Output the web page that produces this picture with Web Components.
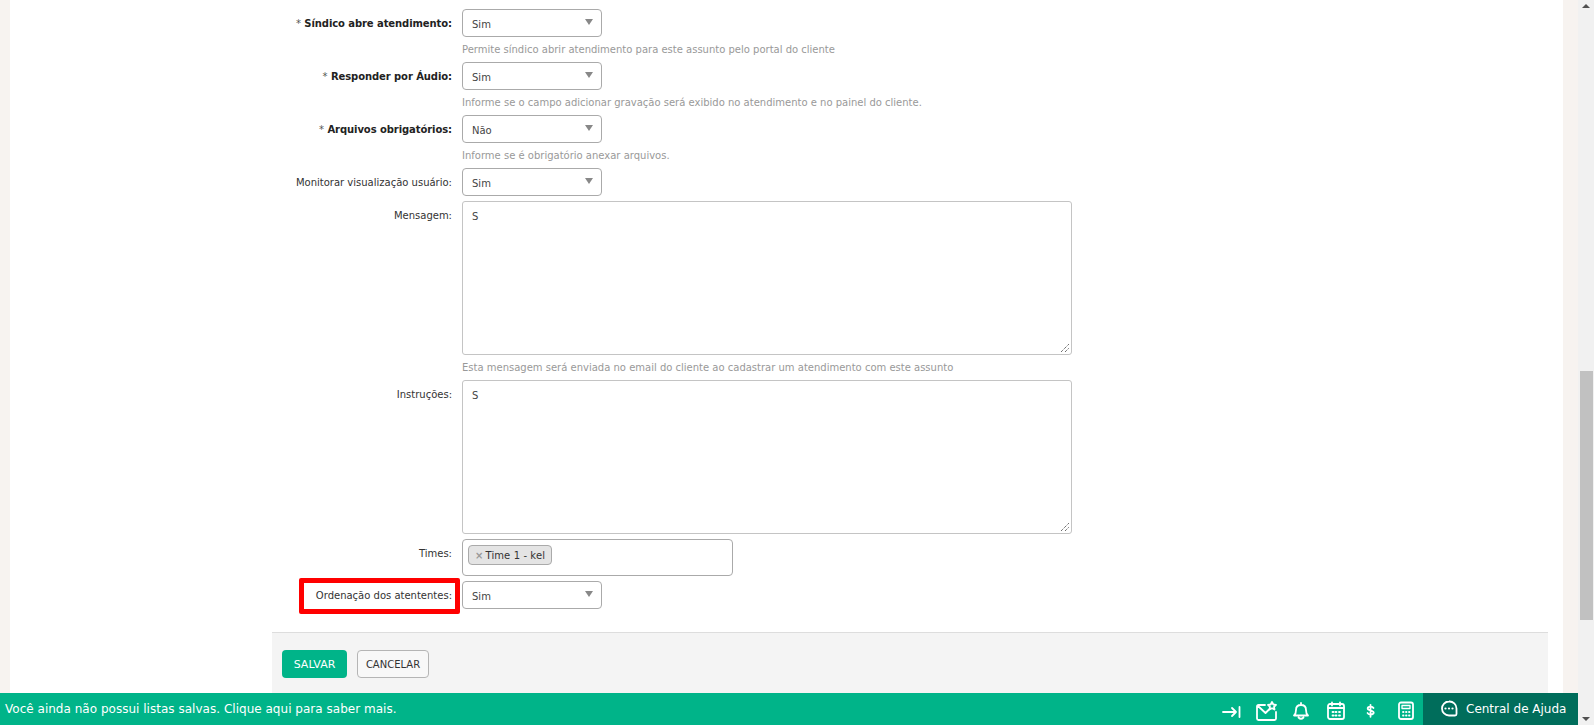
<!DOCTYPE html>
<html lang="pt-BR">
<head>
<meta charset="utf-8">
<title>Assunto</title>
<style>
    html, body { margin: 0; height: 100%; overflow: hidden; }
    body { font-family: "DejaVu Sans", Verdana, sans-serif; font-size: 10px; color: #333; }
</style>
</head>
<body>
<app-shell>
    <form-row label="Síndico abre atendimento:" required hint="Permite síndico abrir atendimento para este assunto pelo portal do cliente"><select-box value="Sim"></select-box></form-row>
    <form-row label="Responder por Áudio:" required hint="Informe se o campo adicionar gravação será exibido no atendimento e no painel do cliente."><select-box value="Sim"></select-box></form-row>
    <form-row label="Arquivos obrigatórios:" required hint="Informe se é obrigatório anexar arquivos."><select-box value="Não"></select-box></form-row>
    <form-row label="Monitorar visualização usuário:"><select-box value="Sim"></select-box></form-row>
    <form-row label="Mensagem:" hint="Esta mensagem será enviada no email do cliente ao cadastrar um atendimento com este assunto"><text-box value="S"></text-box></form-row>
    <form-row label="Instruções:"><text-box value="S"></text-box></form-row>
    <form-row label="Times:"><tag-field><tag-chip>Time 1 - kel</tag-chip></tag-field></form-row>
    <form-row label="Ordenação dos atententes:" marked><select-box value="Sim"></select-box></form-row>
</app-shell>

<script>
class AppShell extends HTMLElement {
    constructor() {
        super();
        this.attachShadow({mode: "open"});
    }
    connectedCallback() {
        this.shadowRoot.innerHTML = `
        <style>
            :host { display: grid; grid-template-columns: 1fr 16px; height: 725px; }
            .left { display: flex; flex-direction: column; min-width: 0; height: 725px; }
            .page { flex: 1; min-height: 0; overflow: hidden; background: #f7f3f0; padding: 0 15px 0 10px; }
            .white { background: #fff; height: 100%; padding: 0 15px 0 262px; }
            .form { display: flex; flex-direction: column; height: 632px; padding-top: 9px; box-sizing: border-box; }
        </style>
        <div class="left">
            <div class="page">
                <div class="white">
                    <div class="form"><slot></slot></div>
                    <form-actions></form-actions>
                </div>
            </div>
            <status-bar></status-bar>
        </div>
        <page-scrollbar></page-scrollbar>
        `;
    }
}

class FormRow extends HTMLElement {
    constructor() {
        super();
        this.attachShadow({mode: "open"});
    }
    connectedCallback() {
        const required = this.hasAttribute("required");
        const hint = this.getAttribute("hint");
        this.shadowRoot.innerHTML = `
        <style>
            :host { display: grid; grid-template-columns: 181px 1fr; column-gap: 9px; margin-bottom: 5px; }
            label { text-align: right; padding-top: 8px; padding-right: 1px; line-height: 14px; font-size: 10px; color: #333; position: relative; white-space: nowrap; }
            label.req { font-weight: bold; color: #222; letter-spacing: -.08px; }
            .star { color: #555; font-weight: normal; }
            .hint { color: #999; font-size: 10px; line-height: 14px; margin-top: 6px; height: 14px; }
            .mark { position: absolute; left: 27px; right: -7px; top: -3px; bottom: -5px; border: 5px solid #f00; border-radius: 2px; }
        </style>
        <label class="${required ? "req" : ""}">${required ? '<span class="star">*</span> ' : ""}${this.getAttribute("label")}${this.hasAttribute("marked") ? '<span class="mark"></span>' : ""}</label>
        <div>
            <slot></slot>
            ${hint ? `<div class="hint">${hint}</div>` : ""}
        </div>
        `;
    }
}

class SelectBox extends HTMLElement {
    constructor() {
        super();
        this.attachShadow({mode: "open"});
    }
    connectedCallback() {
        this.shadowRoot.innerHTML = `
        <style>
            :host { display: flex; align-items: center; box-sizing: border-box; width: 140px; height: 28px; border: 1px solid #aaa; border-radius: 4px; padding: 2px 8px 0 9px; background: #fff; font-size: 10px; color: #444; justify-content: space-between; }
            i { width: 0; height: 0; border: solid transparent; border-width: 6px 4px 0 4px; border-top-color: #888; margin: -4px 0 0 0; }
        </style>
        <span>${this.getAttribute("value")}</span><i></i>
        `;
    }
}

class TextBox extends HTMLElement {
    constructor() {
        super();
        this.attachShadow({mode: "open"});
    }
    connectedCallback() {
        this.shadowRoot.innerHTML = `
        <style>
            :host { display: block; position: relative; box-sizing: border-box; width: 610px; height: 154px; border: 1px solid #c4c4c4; border-radius: 3px; padding: 8px 9px; background: #fff; font-size: 10px; line-height: 14px; color: #444; }
            svg { position: absolute; right: 1px; bottom: 1px; }
        </style>
        ${this.getAttribute("value")}
        <svg width="10" height="10" viewBox="0 0 10 10"><path d="M1 9 9 1M5 9 9 5" stroke="#333" stroke-width="1" stroke-dasharray="1 1" fill="none"/></svg>
        `;
    }
}

class TagField extends HTMLElement {
    constructor() {
        super();
        this.attachShadow({mode: "open"});
    }
    connectedCallback() {
        this.shadowRoot.innerHTML = `
        <style>
            :host { display: block; box-sizing: border-box; width: 271px; height: 37px; border: 1px solid #aaa; border-radius: 4px; padding: 5px 5px; background: #fff; }
        </style>
        <slot></slot>
        `;
    }
}

class TagChip extends HTMLElement {
    constructor() {
        super();
        this.attachShadow({mode: "open"});
    }
    connectedCallback() {
        this.shadowRoot.innerHTML = `
        <style>
            :host { display: inline-flex; align-items: center; box-sizing: border-box; height: 20px; padding: 0 6px 0 6px; background: #e4e4e4; border: 1px solid #aaa; border-radius: 4px; font-size: 10px; letter-spacing: .1px; color: #333; }
            b { color: #999; font-weight: bold; margin-right: 2px; }
        </style>
        <b>×</b><slot></slot>
        `;
    }
}

class FormActions extends HTMLElement {
    constructor() {
        super();
        this.attachShadow({mode: "open"});
    }
    connectedCallback() {
        this.shadowRoot.innerHTML = `
        <style>
            :host { display: flex; gap: 10px; border-top: 1px solid #ddd; background: #f4f4f4; padding: 17px 10px; height: 61px; box-sizing: border-box; }
            button { font-family: inherit; height: 28px; border-radius: 4px; font-size: 10px; box-sizing: border-box; padding: 0; }
            .save { width: 65px; background: #00b489; color: #fff; border: 0; font-size: 11px; }
            .cancel { width: 72px; background: #f8f8f8; color: #333; border: 1px solid #b5b5b5; }
        </style>
        <button class="save">SALVAR</button>
        <button class="cancel">CANCELAR</button>
        `;
    }
}

class StatusBar extends HTMLElement {
    constructor() {
        super();
        this.attachShadow({mode: "open"});
    }
    connectedCallback() {
        this.shadowRoot.innerHTML = `
        <style>
            :host { display: flex; align-items: center; flex: none; height: 32px; background: #00b489; color: #fff; font-family: "DejaVu Sans", Verdana, sans-serif; font-size: 12px; }
            .msg { flex: 1; padding-left: 5px; letter-spacing: .02px; }
            .icons { display: flex; align-items: center; gap: 11px; margin-right: 5px; padding-top: 4px; }
            .icons svg { display: block; width: 24px; height: 24px; fill: none; stroke: #fff; stroke-width: 1.8; stroke-linecap: round; stroke-linejoin: round; }
            .help { display: flex; align-items: center; gap: 8px; height: 32px; width: 155px; box-sizing: border-box; padding-left: 17px; background: #006d5b; }
            .help svg { width: 18px; height: 18px; fill: none; stroke: #fff; stroke-width: 1.8; }
            .help svg circle { fill: #fff; stroke: none; }
        </style>
        <div class="msg">Você ainda não possui listas salvas. Clique aqui para saber mais.</div>
        <div class="icons">
            <svg viewBox="0 0 24 24"><path d="M4 13h13M13 9l4 4-4 4M20.500 8v10"/></svg>
            <svg viewBox="0 0 24 24"><path d="M11 6H4.500Q3 6 3 7.500V19.500Q3 21 4.500 21H20.500Q22 21 22 19.500V13M4 7l7.500 7 3.500-3.500"/><path d="m18 3 1.300 2.500 2.700.4-2 2 .5 2.600-2.500-1.300-2.500 1.300.5-2.600-2-2 2.700-.4z"/></svg>
            <svg viewBox="0 0 24 24"><path d="M5 16.500h14c-1.500-1.200-2-2.500-2-5.500 0-3-2-5-5-5s-5 2-5 5c0 3-.5 4.300-2 5.500zM9.500 18.500q2.500 2.500 5 0M12 4v2"/></svg>
            <svg viewBox="0 0 24 24"><rect x="4" y="5" width="16" height="15" rx="2"/><path d="M8 3.500v3M16 3.500v3M4 9h16M8.500 13h1M11.500 13h1M15 13h1M8.500 16.500h1M11.500 16.500h1M15 16.500h1"/></svg>
            <svg viewBox="0 0 24 24"><path d="M14.500 9C14 8 13 7.700 11.500 7.700 9.700 7.700 8.700 8.400 8.700 9.600c0 2.600 6 1.300 6 4 0 1.200-1.100 1.900-3 1.900-1.500 0-2.800-.4-3.200-1.500M11.500 5.800v12"/></svg>
            <svg viewBox="0 0 24 24"><rect x="5" y="3.500" width="14" height="16.500" rx="2"/><rect x="8" y="6.500" width="8" height="3" stroke-width="1.300"/><path d="M9 13h.5M12 13h.5M15 13h.5M9 16.500h.5M12 16.500h.5M15 16.500h.5"/></svg>
        </div>
        <div class="help">
            <svg viewBox="0 0 18 18"><path d="M9 1.500a7 7 0 1 0 0 14h6q1.500 0 1.500-1.500V8.500a7 7 0 0 0-7.500-7z"/><circle cx="5.500" cy="8.500" r="1.100"/><circle cx="9" cy="8.500" r="1.100"/><circle cx="12.500" cy="8.500" r="1.100"/></svg>
            <span>Central de Ajuda</span>
        </div>
        `;
    }
}

class PageScrollbar extends HTMLElement {
    constructor() {
        super();
        this.attachShadow({mode: "open"});
    }
    connectedCallback() {
        this.shadowRoot.innerHTML = `
        <style>
            :host { display: block; position: relative; background: #f1f1f1; height: 725px; }
            .thumb { position: absolute; left: 2px; right: 1px; top: 371px; height: 249px; background: #c1c1c1; }
            i { position: absolute; left: 4px; width: 0; height: 0; border: solid transparent; border-width: 4px; }
            .up { top: 4px; border-top-width: 0; border-bottom: 4px solid #505050; }
            .down { bottom: 4px; border-bottom-width: 0; border-top: 4px solid #505050; }
        </style>
        <i class="up"></i><div class="thumb"></div><i class="down"></i>
        `;
    }
}

customElements.define("app-shell", AppShell);
customElements.define("form-row", FormRow);
customElements.define("select-box", SelectBox);
customElements.define("text-box", TextBox);
customElements.define("tag-field", TagField);
customElements.define("tag-chip", TagChip);
customElements.define("form-actions", FormActions);
customElements.define("status-bar", StatusBar);
customElements.define("page-scrollbar", PageScrollbar);
</script>
</body>
</html>
